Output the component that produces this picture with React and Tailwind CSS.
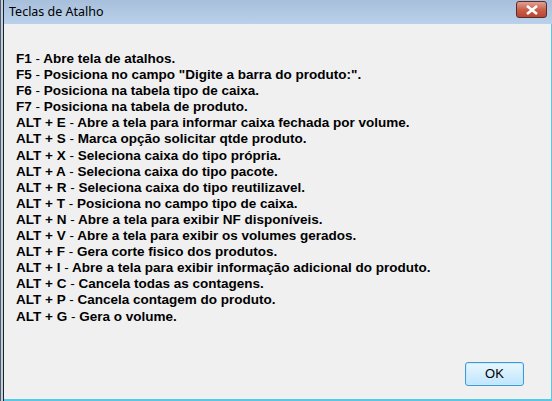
import React from "react";

const lines = [
  ["F1", "Abre tela de atalhos."],
  ["F5", "Posiciona no campo \"Digite a barra do produto:\"."],
  ["F6", "Posiciona na tabela tipo de caixa."],
  ["F7", "Posiciona na tabela de produto."],
  ["ALT + E", "Abre a tela para informar caixa fechada por volume."],
  ["ALT + S", "Marca opção solicitar qtde produto."],
  ["ALT + X", "Seleciona caixa do tipo própria."],
  ["ALT + A", "Seleciona caixa do tipo pacote."],
  ["ALT + R", "Seleciona caixa do tipo reutilizavel."],
  ["ALT + T", "Posiciona no campo tipo de caixa."],
  ["ALT + N", "Abre a tela para exibir NF disponíveis."],
  ["ALT + V", "Abre a tela para exibir os volumes gerados."],
  ["ALT + F", "Gera corte fisico dos produtos."],
  ["ALT + I", "Abre a tela para exibir informação adicional do produto."],
  ["ALT + C", "Cancela todas as contagens."],
  ["ALT + P", "Cancela contagem do produto."],
  ["ALT + G", "Gera o volume."],
];

export default function App() {
  return (
    <div className="w-[552px] h-[401px] overflow-hidden bg-[#f0f0f0] flex flex-col border-l border-[#5a5a5a]">
      <div className="flex flex-1 flex-col border-l-[2px] border-[#b9d1ea]">
        <div className="flex flex-1 flex-col border-l border-[#222]">
          {/* title bar */}
          <div className="h-[24px] shrink-0 flex items-center justify-between bg-gradient-to-b from-[#a7bfdb] to-[#b9d1ea] pl-[5px] pr-[5px]">
            <span className="text-[12.5px] text-[#000] leading-none" style={{ fontFamily: '"Noto Sans", "Open Sans", sans-serif' }}>
              Teclas de Atalho
            </span>
            <div className="w-[31px] h-[17px] mt-[-5px] rounded-[3px] border border-[#5b2a2a] bg-gradient-to-b from-[#e0a193] via-[#c8604c] to-[#b84632] flex items-center justify-center">
              <svg width="14" height="10" viewBox="0 0 14 10">
                <path d="M2 1 L12 9 M12 1 L2 9" stroke="#fff" strokeWidth="2.6" fill="none" />
              </svg>
            </div>
          </div>
          {/* client */}
          <div className="flex flex-1 flex-col border-b-[2px] border-[#57c8e8] border-r">
            <div className="flex-1 flex flex-col pl-[12px] pt-[27px]" style={{ fontFamily: '"Liberation Sans", Arial, sans-serif' }}>
              {lines.map(([k, t], i) => (
                <div key={i} className="text-[13.5px] leading-[16.1px] font-bold text-[#000] whitespace-nowrap">
                  {k} <span className="font-normal">-</span> {t}
                </div>
              ))}
            </div>
            <div className="flex justify-end pr-[27px] pb-[13px]">
              <button className="w-[59px] h-[24px] rounded-[3px] border border-[#3c9ad8] bg-gradient-to-b from-[#eaf6fd] to-[#bee6fd] text-[13px] text-black shadow-[inset_0_0_0_1px_#c5ebfd]" style={{ fontFamily: '"Liberation Sans", Arial, sans-serif' }}>
                OK
              </button>
            </div>
          </div>
        </div>
      </div>
    </div>
  );
}
